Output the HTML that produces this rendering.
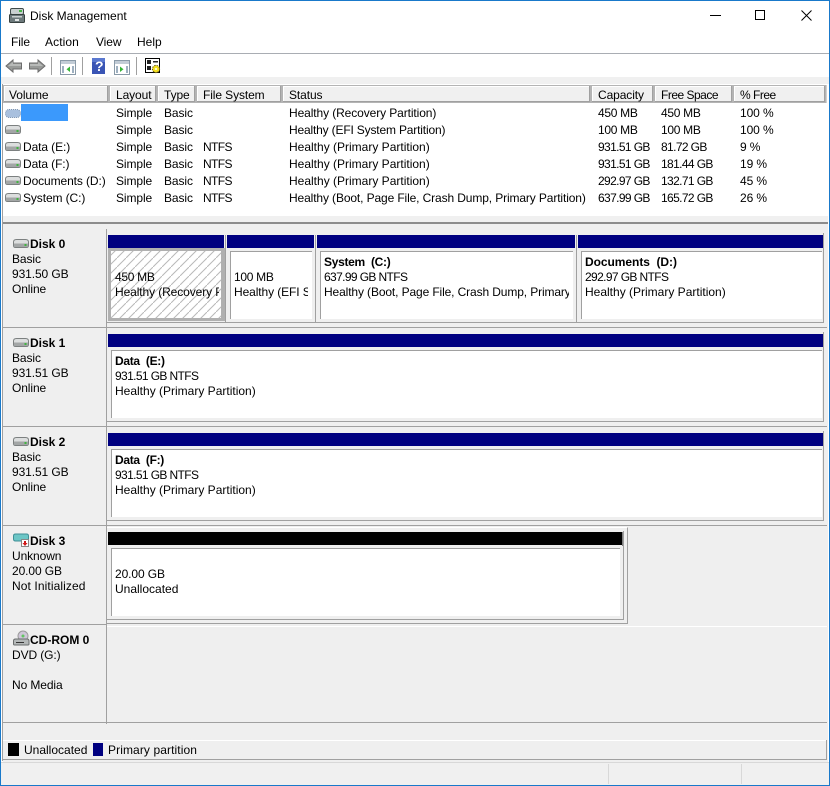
<!DOCTYPE html>
<html><head><meta charset="utf-8"><title>Disk Management</title>
<style>
html,body{margin:0;padding:0;width:830px;height:786px;overflow:hidden;background:#fff}
body{position:relative;font:12px/15px "Liberation Sans",sans-serif;color:#000}
.t{position:absolute;white-space:nowrap;letter-spacing:-.1px;margin-top:1px}
.b{font-weight:bold;letter-spacing:0}
.r{position:absolute}
.h{position:absolute;top:85px;height:18px;background:#f0f0f0;box-sizing:border-box;border:1px solid #b4b4b4;box-shadow:inset -1px -1px 0 #a0a0a0,inset 1px 1px 0 #fff}
.h span{position:absolute;left:6px;top:2px;white-space:nowrap;letter-spacing:-.1px}
.white{position:absolute;background:#fff;border-top:1px solid #a0a0a0;border-left:1px solid #a0a0a0;box-sizing:border-box}
.clip{position:absolute;overflow:hidden;white-space:nowrap;letter-spacing:-.1px;margin-top:1px}
.n{letter-spacing:-.62px}
.m{letter-spacing:-.3px}
.z{letter-spacing:0}
.y{letter-spacing:.1px}
.bs{font-weight:bold;letter-spacing:-.3px}
.l{margin-top:0}
svg{position:absolute;overflow:visible}
</style></head><body>

<svg width="0" height="0" style="position:absolute"><defs>
<g id="d"><path d="M.5 4Q.5 1.500 3.500 1.500H12.500Q15.500 1.500 15.500 4V7.500Q15.500 9.500 13.500 9.500H2.500Q.5 9.500 .5 7.500Z" fill="#dcdede" stroke="#7c8080"/><path d="M1 5.500H15V8Q15 9 13.500 9H2.500Q1 9 1 8Z" fill="#a3a6a6"/><rect x="11.500" y="6" width="2" height="2" fill="#3fb53f"/></g>
</defs></svg>

<!-- window frame -->
<div class="r" style="left:0;top:0;width:830px;height:1px;background:#1979ca"></div>
<div class="r" style="left:0;top:0;width:1px;height:786px;background:#1979ca"></div>
<div class="r" style="left:829px;top:0;width:1px;height:786px;background:#1979ca"></div>
<div class="r" style="left:0;top:785px;width:830px;height:1px;background:#1979ca"></div>

<!-- title -->
<svg style="left:9px;top:8px" width="16" height="16"><rect x="1.500" y=".5" width="13" height="6" rx="1.500" fill="#c8d0d0" stroke="#3f4a4a"/><rect x="10" y="2" width="3" height="2" fill="#46b546"/><rect x=".5" y="6.500" width="15" height="8" rx="1" fill="#6d7a7c" stroke="#36403f"/><rect x="3" y="8" width="10" height="1.500" fill="#c9d0d0"/><rect x="6" y="11" width="4" height="2" fill="#e2e6e6"/></svg>
<div class="t z" style="left:30px;top:8px">Disk Management</div>
<svg style="left:710px;top:15px" width="13" height="1"><rect width="11" height="1" fill="#000"/></svg>
<svg style="left:755px;top:10px" width="11" height="11"><rect x=".5" y=".5" width="9" height="9" fill="none" stroke="#000"/></svg>
<svg style="left:801px;top:10px" width="11" height="11"><path d="M.5 .5L10.500 10.500M10.500 .5L.5 10.500" stroke="#000" fill="none"/></svg>

<!-- menu -->
<div class="t" style="left:11px;top:34px">File</div>
<div class="t y" style="left:45px;top:34px">Action</div>
<div class="t" style="left:96px;top:34px">View</div>
<div class="t z" style="left:137px;top:34px">Help</div>
<div class="r" style="left:1px;top:53px;width:828px;height:1px;background:#a9adb3"></div>

<!-- toolbar -->
<svg style="left:5px;top:58px" width="18" height="16"><path d="M1 8L8 2V5H16.500V11H8V14Z" fill="#989a98" stroke="#6c6c6c"/><path d="M3 8L8 4V6H16V8Z" fill="#b8bab8"/></svg>
<svg style="left:28px;top:58px" width="18" height="16"><path d="M17 8L10 2V5H1.500V11H10V14Z" fill="#989a98" stroke="#6c6c6c"/><path d="M15 8L10 4V6H2V8Z" fill="#b8bab8"/></svg>
<div class="r" style="left:51px;top:57px;width:1px;height:18px;background:#a0a0a0"></div>
<svg style="left:60px;top:60px" width="16" height="15"><rect x=".5" y=".5" width="15" height="14" fill="#fff" stroke="#8a9aa8"/><rect x="1" y="1" width="14" height="3" fill="#c2ccd6"/><rect x="2" y="6" width="2" height="7" fill="#9eb0c0"/><rect x="12" y="6" width="2" height="7" fill="#9eb0c0"/><path d="M10 6.500V12L6.500 9.200Z" fill="#35b535"/></svg>
<div class="r" style="left:82px;top:57px;width:1px;height:18px;background:#a0a0a0"></div>
<svg style="left:92px;top:58px" width="13" height="16"><rect width="13" height="16" fill="#3a55b5"/><rect x="0" y="0" width="13" height="4" fill="#5a78d0"/></svg>
<div class="t b" style="left:95px;top:57px;color:#fff;font-size:14px;line-height:16px">?</div>
<svg style="left:114px;top:60px" width="16" height="15"><rect x=".5" y=".5" width="15" height="14" fill="#fff" stroke="#8a9aa8"/><rect x="1" y="1" width="14" height="3" fill="#c2ccd6"/><rect x="2" y="6" width="2" height="7" fill="#9eb0c0"/><rect x="12" y="6" width="2" height="7" fill="#9eb0c0"/><path d="M6 6.500V12L9.500 9.200Z" fill="#35b535"/></svg>
<div class="r" style="left:136px;top:57px;width:1px;height:18px;background:#a0a0a0"></div>
<svg style="left:145px;top:58px" width="16" height="16"><rect x=".5" y=".5" width="14" height="14" fill="#fff" stroke="#000"/><rect x="2" y="2" width="4" height="4" fill="#222"/><rect x="2" y="8" width="4" height="4" fill="#222"/><rect x="8" y="3" width="5" height="1.500" fill="#222"/><circle cx="11" cy="11" r="3.600" fill="#f4e020" stroke="#6a5a10" stroke-dasharray="1.500 1"/><circle cx="11" cy="11" r="1" fill="#fff"/></svg>

<!-- band below toolbar -->
<div class="r" style="left:1px;top:77px;width:828px;height:7px;background:#f0f0f0"></div>

<!-- column headers -->
<div class="r" style="left:2px;top:84px;width:1px;height:677px;background:#a0a0a0"></div>
<div class="r" style="left:3px;top:85px;width:824px;height:18px;background:#d0d0d0"></div>
<div class="h" style="left:3px;width:106px"><span style="left:5px">Volume</span></div>
<div class="h" style="left:109px;width:48px"><span>Layout</span></div>
<div class="h" style="left:157px;width:39px"><span>Type</span></div>
<div class="h" style="left:196px;width:86px"><span>File System</span></div>
<div class="h" style="left:282px;width:309px"><span>Status</span></div>
<div class="h" style="left:591px;width:63px"><span class="z">Capacity</span></div>
<div class="h" style="left:654px;width:79px"><span style="letter-spacing:-.5px">Free Space</span></div>
<div class="h" style="left:733px;width:93px"><span style="letter-spacing:-.5px">% Free</span></div>

<!-- rows -->
<svg style="left:5px;top:108px" width="16" height="11"><rect x=".5" y="1.500" width="15" height="8" rx="3.500" fill="#a9c0de" stroke="#7e94b0" stroke-dasharray="1 1"/></svg>
<div class="r" style="left:21px;top:104px;width:47px;height:17px;background:#3b99fc"></div>
<svg style="left:5px;top:124px" width="16" height="11"><use href="#d"/></svg>
<svg style="left:5px;top:141px" width="16" height="11"><use href="#d"/></svg>
<svg style="left:5px;top:158px" width="16" height="11"><use href="#d"/></svg>
<svg style="left:5px;top:175px" width="16" height="11"><use href="#d"/></svg>
<svg style="left:5px;top:192px" width="16" height="11"><use href="#d"/></svg>
<div class="t" style="left:23px;top:139px">Data (E:)</div>
<div class="t" style="left:23px;top:156px">Data (F:)</div>
<div class="t" style="left:23px;top:173px">Documents (D:)</div>
<div class="t" style="left:23px;top:190px">System (C:)</div>

<div class="t" style="left:116px;top:105px">Simple</div><div class="t" style="left:164px;top:105px">Basic</div><div class="t" style="left:289px;top:105px">Healthy (Recovery Partition)</div><div class="t m" style="left:598px;top:105px">450 MB</div><div class="t m" style="left:661px;top:105px">450 MB</div><div class="t" style="left:740px;top:105px">100 %</div>
<div class="t" style="left:116px;top:122px">Simple</div><div class="t" style="left:164px;top:122px">Basic</div><div class="t" style="left:289px;top:122px;letter-spacing:-.17px">Healthy (EFI System Partition)</div><div class="t m" style="left:598px;top:122px">100 MB</div><div class="t m" style="left:661px;top:122px">100 MB</div><div class="t" style="left:740px;top:122px">100 %</div>
<div class="t" style="left:116px;top:139px">Simple</div><div class="t" style="left:164px;top:139px">Basic</div><div class="t n" style="left:203px;top:139px">NTFS</div><div class="t z" style="left:289px;top:139px">Healthy (Primary Partition)</div><div class="t n" style="left:598px;top:139px">931.51 GB</div><div class="t n" style="left:661px;top:139px">81.72 GB</div><div class="t" style="left:740px;top:139px">9 %</div>
<div class="t" style="left:116px;top:156px">Simple</div><div class="t" style="left:164px;top:156px">Basic</div><div class="t n" style="left:203px;top:156px">NTFS</div><div class="t z" style="left:289px;top:156px">Healthy (Primary Partition)</div><div class="t n" style="left:598px;top:156px">931.51 GB</div><div class="t n" style="left:661px;top:156px">181.44 GB</div><div class="t" style="left:740px;top:156px">19 %</div>
<div class="t" style="left:116px;top:173px">Simple</div><div class="t" style="left:164px;top:173px">Basic</div><div class="t n" style="left:203px;top:173px">NTFS</div><div class="t z" style="left:289px;top:173px">Healthy (Primary Partition)</div><div class="t n" style="left:598px;top:173px">292.97 GB</div><div class="t n" style="left:661px;top:173px">132.71 GB</div><div class="t" style="left:740px;top:173px">45 %</div>
<div class="t" style="left:116px;top:190px">Simple</div><div class="t" style="left:164px;top:190px">Basic</div><div class="t n" style="left:203px;top:190px">NTFS</div><div class="t" style="left:289px;top:190px;letter-spacing:-.12px">Healthy (Boot, Page File, Crash Dump, Primary Partition)</div><div class="t n" style="left:598px;top:190px">637.99 GB</div><div class="t n" style="left:661px;top:190px">165.72 GB</div><div class="t" style="left:740px;top:190px">26 %</div>

<!-- splitter -->
<div class="r" style="left:3px;top:216px;width:825px;height:6px;background:#f0f0f0"></div>
<div class="r" style="left:3px;top:222px;width:825px;height:2px;background:#8c8c8c"></div>
<div class="r" style="left:3px;top:224px;width:825px;height:538px;background:#efefef"></div>

<!-- left column dividers -->
<div class="r" style="left:106px;top:229px;width:1px;height:495px;background:#a0a0a0"></div>
<div class="r" style="left:3px;top:327px;width:824px;height:1px;background:#a0a0a0"></div>
<div class="r" style="left:3px;top:426px;width:824px;height:1px;background:#a0a0a0"></div>
<div class="r" style="left:3px;top:525px;width:104px;height:1px;background:#a0a0a0"></div>
<div class="r" style="left:3px;top:624px;width:104px;height:1px;background:#a0a0a0"></div>
<div class="r" style="left:107px;top:525px;width:720px;height:1px;background:#a0a0a0"></div>
<div class="r" style="left:107px;top:626px;width:720px;height:1px;background:#fff"></div>
<div class="r" style="left:3px;top:722px;width:824px;height:1px;background:#a0a0a0"></div>

<!-- Disk labels -->
<svg style="left:13px;top:238px" width="16" height="11"><use href="#d"/></svg>
<div class="t b l" style="left:30px;top:237px">Disk 0</div>
<div class="t l" style="left:12px;top:252px">Basic</div><div class="t l" style="left:12px;top:267px">931.50 GB</div><div class="t l" style="left:12px;top:282px">Online</div>
<svg style="left:13px;top:337px" width="16" height="11"><use href="#d"/></svg>
<div class="t b l" style="left:30px;top:336px">Disk 1</div>
<div class="t l" style="left:12px;top:351px">Basic</div><div class="t l" style="left:12px;top:366px">931.51 GB</div><div class="t l" style="left:12px;top:381px">Online</div>
<svg style="left:13px;top:436px" width="16" height="11"><use href="#d"/></svg>
<div class="t b l" style="left:30px;top:435px">Disk 2</div>
<div class="t l" style="left:12px;top:450px">Basic</div><div class="t l" style="left:12px;top:465px">931.51 GB</div><div class="t l" style="left:12px;top:480px">Online</div>
<svg style="left:13px;top:533px" width="17" height="15"><path d="M.5 3Q.5 1 2.500 1H13.500Q15.500 1 15.500 3V6Q15.500 8 13.500 8H2.500Q.5 8 .5 6Z" fill="#6cc6c6" stroke="#3f8f96"/><rect x="8.500" y="6.500" width="7" height="7" fill="#fff" stroke="#888"/><path d="M11 8H13V10H14.500L12 13L9.500 10H11Z" fill="#d01818"/></svg>
<div class="t b l" style="left:30px;top:534px">Disk 3</div>
<div class="t l" style="left:12px;top:549px">Unknown</div><div class="t l" style="left:12px;top:564px">20.00 GB</div><div class="t l y" style="left:12px;top:579px">Not Initialized</div>
<svg style="left:13px;top:630px" width="17" height="16"><circle cx="10" cy="6" r="5" fill="#cfc6d8" stroke="#9a9a9a"/><circle cx="10" cy="6" r="1.500" fill="#62c462"/><path d="M.5 11Q.5 9 2.500 9H14Q16 9 16 11V14Q16 15 15 15H1.500Q.5 15 .5 14Z" fill="#b4b8b8" stroke="#6a6e6e"/><rect x="3" y="12" width="8" height="1" fill="#333"/></svg>
<div class="t b l" style="left:30px;top:633px">CD-ROM 0</div>
<div class="t l" style="left:12px;top:648px">DVD (G:)</div><div class="t l" style="left:12px;top:678px">No Media</div>

<!-- Disk 0 -->
<div class="r" style="left:107px;top:233px;width:717px;height:90px;border-right:1px solid #a0a0a0;box-sizing:border-box;border-bottom:1px solid #a0a0a0"></div>
<div class="r" style="left:108px;top:235px;width:116px;height:13px;background:#000080"></div>
<div class="r" style="left:227px;top:235px;width:87px;height:13px;background:#000080"></div>
<div class="r" style="left:317px;top:235px;width:258px;height:13px;background:#000080"></div>
<div class="r" style="left:578px;top:235px;width:245px;height:13px;background:#000080"></div>
<div class="r" style="left:225px;top:235px;width:1px;height:87px;background:#a0a0a0"></div>
<div class="r" style="left:315px;top:235px;width:1px;height:87px;background:#a0a0a0"></div>
<div class="r" style="left:576px;top:235px;width:1px;height:87px;background:#a0a0a0"></div>

<svg style="left:108px;top:248px" width="117" height="73"><defs><pattern id="p" width="9" height="9" patternUnits="userSpaceOnUse" patternTransform="translate(0 1)"><path d="M-1 10L10 -1" stroke="#b8b8b8" stroke-width="1" fill="none"/></pattern></defs><rect width="117" height="73" fill="#b0b0b0"/><rect x="3" y="3" width="110" height="67" fill="#fff"/><rect x="3" y="3" width="110" height="67" fill="url(#p)"/></svg>
<div class="clip m" style="left:115px;top:269px;width:104px">450 MB</div>
<div class="clip" style="left:115px;top:284px;width:104px">Healthy (Recovery Partition)</div>

<div class="white" style="left:230px;top:251px;width:82px;height:68px"></div>
<div class="clip m" style="left:234px;top:269px;width:74px">100 MB</div>
<div class="clip" style="left:234px;top:284px;width:74px">Healthy (EFI System Partition)</div>

<div class="white" style="left:320px;top:251px;width:253px;height:68px"></div>
<div class="clip bs" style="left:324px;top:254px;width:245px">System&nbsp; (C:)</div>
<div class="clip n" style="left:324px;top:269px;width:245px">637.99 GB NTFS</div>
<div class="clip" style="left:324px;top:284px;width:245px;letter-spacing:-.12px">Healthy (Boot, Page File, Crash Dump, Primary Partition)</div>

<div class="white" style="left:581px;top:251px;width:241px;height:68px"></div>
<div class="clip b" style="left:585px;top:254px;width:230px;font-weight:bold;letter-spacing:-.05px">Documents&nbsp; (D:)</div>
<div class="clip n" style="left:585px;top:269px;width:230px">292.97 GB NTFS</div>
<div class="clip z" style="left:585px;top:284px;width:230px">Healthy (Primary Partition)</div>

<!-- Disk 1 -->
<div class="r" style="left:107px;top:332px;width:717px;height:90px;border-right:1px solid #a0a0a0;box-sizing:border-box;border-bottom:1px solid #a0a0a0"></div>
<div class="r" style="left:108px;top:334px;width:715px;height:13px;background:#000080"></div>
<div class="white" style="left:111px;top:350px;width:711px;height:68px"></div>
<div class="clip bs" style="left:115px;top:353px;width:400px">Data&nbsp; (E:)</div>
<div class="clip n" style="left:115px;top:368px;width:400px">931.51 GB NTFS</div>
<div class="clip z" style="left:115px;top:383px;width:400px">Healthy (Primary Partition)</div>

<!-- Disk 2 -->
<div class="r" style="left:107px;top:431px;width:717px;height:90px;border-right:1px solid #a0a0a0;box-sizing:border-box;border-bottom:1px solid #a0a0a0"></div>
<div class="r" style="left:108px;top:433px;width:715px;height:13px;background:#000080"></div>
<div class="white" style="left:111px;top:449px;width:711px;height:68px"></div>
<div class="clip bs" style="left:115px;top:452px;width:400px">Data&nbsp; (F:)</div>
<div class="clip n" style="left:115px;top:467px;width:400px">931.51 GB NTFS</div>
<div class="clip z" style="left:115px;top:482px;width:400px">Healthy (Primary Partition)</div>

<!-- Disk 3 -->
<div class="r" style="left:107px;top:527px;width:521px;height:97px;border-right:1px solid #a0a0a0;border-bottom:1px solid #a0a0a0;border-top:1px solid #fff;box-sizing:border-box"></div>
<div class="r" style="left:107px;top:531px;width:517px;height:89px;border-right:1px solid #a0a0a0;border-bottom:1px solid #a0a0a0;box-sizing:border-box"></div>
<div class="r" style="left:108px;top:532px;width:514px;height:13px;background:#000"></div>
<div class="r" style="left:622px;top:532px;width:1px;height:14px;background:#808080"></div>
<div class="white" style="left:111px;top:548px;width:509px;height:68px"></div>
<div class="t" style="left:115px;top:566px">20.00 GB</div>
<div class="t z" style="left:115px;top:581px">Unallocated</div>

<!-- Legend -->
<div class="r" style="left:3px;top:740px;width:823px;height:1px;background:#fff"></div>
<div class="r" style="left:826px;top:740px;width:1px;height:20px;background:#a0a0a0"></div>
<div class="r" style="left:3px;top:759px;width:824px;height:1px;background:#a0a0a0"></div>
<div class="r" style="left:8px;top:743px;width:11px;height:13px;background:#000"></div>
<div class="t z" style="left:24px;top:742px">Unallocated</div>
<div class="r" style="left:93px;top:743px;width:10px;height:13px;background:#000080"></div>
<div class="t y" style="left:108px;top:742px">Primary partition</div>

<!-- Status bar -->
<div class="r" style="left:1px;top:762px;width:828px;height:23px;background:#f0f0f0;border-top:1px solid #d8d8d8;box-sizing:border-box"></div>
<div class="r" style="left:608px;top:764px;width:1px;height:20px;background:#d8d8d8"></div>
<div class="r" style="left:741px;top:764px;width:1px;height:20px;background:#d8d8d8"></div>
</body></html>
